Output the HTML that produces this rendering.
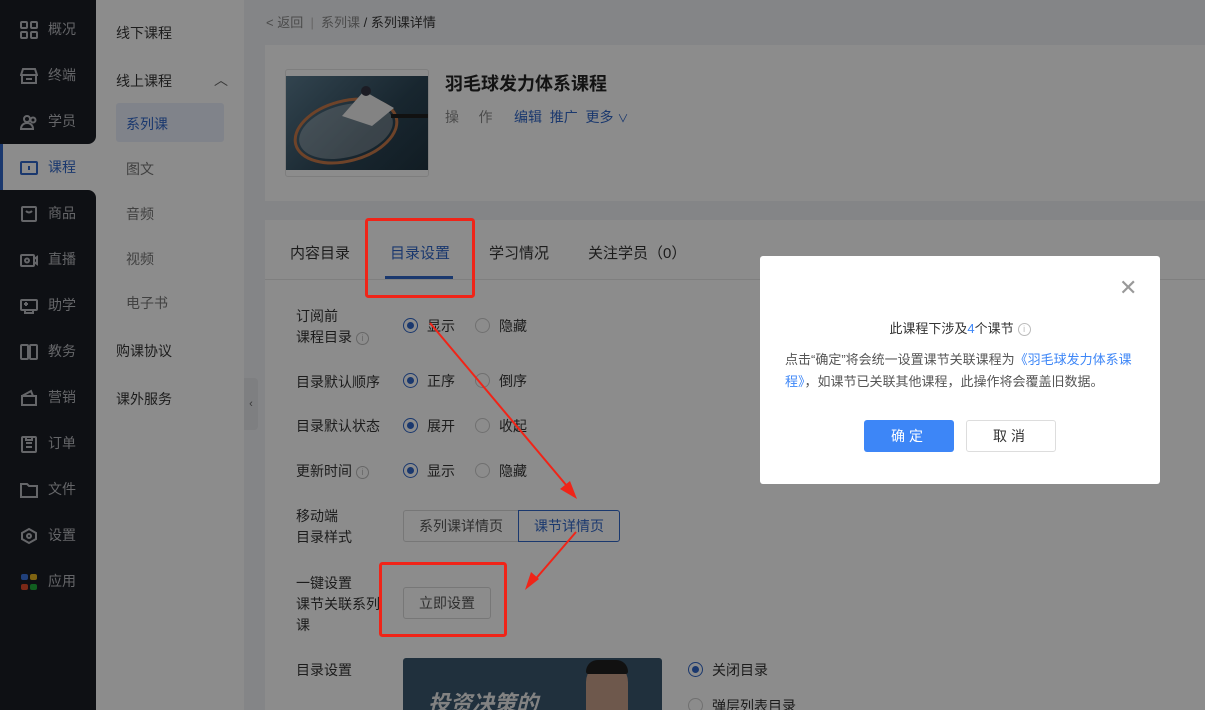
<!DOCTYPE html>
<html style="overflow:hidden;height:710px"><head><meta charset="utf-8"><style>
*{margin:0;padding:0;box-sizing:border-box}
html,body{width:1205px;height:710px;overflow:hidden}
body{position:relative;font-family:"Liberation Sans","Noto Sans CJK SC",sans-serif;font-size:14px;color:#1c1c1c;background:#848587}
.a{position:absolute;white-space:nowrap}
#side{position:absolute;left:0;top:0;width:96px;height:710px;background:#8c8c8c}
.dk{position:absolute;left:0;width:96px;background:#0e1014}
.si{position:absolute;left:20px;width:70px;height:20px;color:#656669;font-size:14px}
.si svg{position:absolute;left:0;top:2px}
.si span{position:absolute;left:28px;top:0}
#side2{position:absolute;left:96px;top:0;width:148px;height:710px;background:#8c8c8c}
.card{position:absolute;background:#8c8c8c}
.r{position:absolute;width:15px;height:15px;border-radius:50%;border:1px solid #707070;background:#8c8c8c}
.r.on{border-color:#1a386e}
.r.on:after{content:"";position:absolute;left:3px;top:3px;width:7px;height:7px;border-radius:50%;background:#1a386e}
.info{display:inline-block;width:13px;height:13px;border:1px solid #676767;border-radius:50%;font-size:9px;line-height:11px;text-align:center;color:#676767;vertical-align:1px;margin-left:4px}
.info2{display:inline-block;width:13px;height:13px;border:1px solid #bbb;border-radius:50%;font-size:9px;line-height:11px;text-align:center;color:#bbb;vertical-align:1px;margin-left:4px}
</style></head><body>
<div id="side">
 <div class="dk" style="top:0;height:144px;border-bottom-right-radius:8px"></div>
 <div class="dk" style="top:190px;height:520px;border-top-right-radius:8px"></div>
 <div style="position:absolute;left:0;top:144px;width:3px;height:46px;background:#1a386e"></div>
 <div class="si" style="top:19px"><svg width="18" height="18" fill="none" stroke="#656669" stroke-width="2"><rect x="1" y="1" width="6" height="6" rx="1"/><rect x="11" y="1" width="6" height="6" rx="1"/><rect x="1" y="11" width="6" height="6" rx="1"/><rect x="11" y="11" width="6" height="6" rx="1"/></svg><span>概况</span></div>
 <div class="si" style="top:65px"><svg width="18" height="18" fill="none" stroke="#656669" stroke-width="2"><path d="M3 2h12l2 6H1z M2 8v8h14V8 M6 12h6"/></svg><span>终端</span></div>
 <div class="si" style="top:111px"><svg width="18" height="18" fill="none" stroke="#656669" stroke-width="2"><circle cx="7" cy="6" r="3"/><circle cx="13" cy="7" r="2.5"/><path d="M1 16c0-4 3-6 6-6s6 2 6 6z"/></svg><span>学员</span></div>
 <div class="si" style="top:157px;color:#1a386e"><svg width="18" height="18" fill="none" stroke="#1a386e" stroke-width="2"><rect x="1" y="3" width="16" height="12" rx="1"/><path d="M9 7v4"/></svg><span>课程</span></div>
 <div class="si" style="top:203px"><svg width="18" height="18" fill="none" stroke="#656669" stroke-width="2"><rect x="2" y="2" width="14" height="14" rx="1"/><path d="M6 6q3 3 6 0"/></svg><span>商品</span></div>
 <div class="si" style="top:249px"><svg width="18" height="18" fill="none" stroke="#656669" stroke-width="2"><rect x="1" y="4" width="13" height="11" rx="1"/><circle cx="7" cy="9.5" r="2"/><path d="M14 8l3-2v7l-3-2"/></svg><span>直播</span></div>
 <div class="si" style="top:295px"><svg width="18" height="18" fill="none" stroke="#656669" stroke-width="2"><rect x="1" y="3" width="16" height="10" rx="1"/><path d="M5 13v3h8v-3 M4 7h4 M6 5v4"/></svg><span>助学</span></div>
 <div class="si" style="top:341px"><svg width="18" height="18" fill="none" stroke="#656669" stroke-width="2"><rect x="1" y="2" width="7" height="14" rx="1"/><rect x="10" y="2" width="7" height="14" rx="1"/></svg><span>教务</span></div>
 <div class="si" style="top:387px"><svg width="18" height="18" fill="none" stroke="#656669" stroke-width="2"><path d="M2 7h14v9H2z M2 7l9-5 2 5"/></svg><span>营销</span></div>
 <div class="si" style="top:433px"><svg width="18" height="18" fill="none" stroke="#656669" stroke-width="2"><rect x="2" y="2" width="14" height="15" rx="1"/><path d="M6 8h6 M6 12h6 M6 2v3h6V2"/></svg><span>订单</span></div>
 <div class="si" style="top:479px"><svg width="18" height="18" fill="none" stroke="#656669" stroke-width="2"><path d="M1 3h6l2 2h8v11H1z"/></svg><span>文件</span></div>
 <div class="si" style="top:525px"><svg width="18" height="18" fill="none" stroke="#656669" stroke-width="2"><path d="M9 2l7 4v6l-7 4-7-4V6z"/><circle cx="9" cy="9" r="2"/></svg><span>设置</span></div>
 <div class="si" style="top:571px"><svg width="18" height="18"><rect x="1" y="1" width="7" height="6" rx="2" fill="#20407b"/><rect x="10" y="1" width="7" height="6" rx="2" fill="#7f6311"/><rect x="1" y="11" width="7" height="6" rx="2" fill="#7b2917"/><rect x="10" y="11" width="7" height="6" rx="2" fill="#115f20"/></svg><span>应用</span></div>
</div>
<div id="side2">
 <div class="a" style="left:20px;top:23px">线下课程</div>
 <div class="a" style="left:20px;top:71px">线上课程</div>
 <div class="a" style="left:118px;top:70px;color:#383838">︿</div>
 <div class="a" style="left:20px;top:103px;width:108px;height:39px;background:#80838a;border-radius:3px"></div>
 <div class="a" style="left:30px;top:114px;color:#1a386e">系列课</div>
 <div class="a" style="left:30px;top:159px;color:#414141">图文</div>
 <div class="a" style="left:30px;top:204px;color:#414141">音频</div>
 <div class="a" style="left:30px;top:249px;color:#414141">视频</div>
 <div class="a" style="left:30px;top:293px;color:#414141">电子书</div>
 <div class="a" style="left:20px;top:341px">购课协议</div>
 <div class="a" style="left:20px;top:389px">课外服务</div>
</div>
<div class="a" style="left:244px;top:378px;width:14px;height:52px;background:#7e7f81;border-radius:0 4px 4px 0;color:#383838;font-size:11px;line-height:52px;text-align:center">‹</div>
<div class="a" style="left:266px;top:12px;font-size:13px;color:#4b4b4b">&lt; 返回 &nbsp;<span style="color:#666">|</span>&nbsp; 系列课 <span style="color:#1c1c1c">/ 系列课详情</span></div>
<div class="card" style="left:265px;top:45px;width:940px;height:156px"></div>
<div class="a" style="left:285px;top:69px;width:144px;height:108px;border:1px solid #7e7e7e;border-radius:3px"></div>
<div class="a" style="left:286px;top:76px;width:142px;height:94px;background:linear-gradient(135deg,#32444f,#18262f 60%,#111c23);overflow:hidden">
 <svg width="142" height="94"><ellipse cx="60" cy="55" rx="52" ry="30" fill="none" stroke="#6e4329" stroke-width="3" transform="rotate(-15 60 55)"/><ellipse cx="60" cy="55" rx="48" ry="26" fill="rgba(140,140,140,.3)" transform="rotate(-15 60 55)"/><path d="M105 40h37" stroke="#111" stroke-width="4"/><path d="M78 15l-22 25 30 10 22-18z" fill="#838383"/><circle cx="80" cy="15" r="5" fill="#1c1c24"/></svg>
</div>
<div class="a" style="left:445px;top:70px;font-size:18px;font-weight:bold;color:#131313">羽毛球发力体系课程</div>
<div class="a" style="left:445px;top:107px;color:#4b4b4b">操 &nbsp; &nbsp; 作</div>
<div class="a" style="left:514px;top:107px;color:#1a386e">编辑 &nbsp;推广 &nbsp;更多 <span style="font-size:11px">∨</span></div>
<div class="card" style="left:265px;top:220px;width:940px;height:490px"></div>
<div class="a" style="left:290px;top:242px;font-size:15px">内容目录</div>
<div class="a" style="left:390px;top:242px;font-size:15px;color:#1a386e">目录设置</div>
<div class="a" style="left:489px;top:242px;font-size:15px">学习情况</div>
<div class="a" style="left:588px;top:242px;font-size:15px">关注学员（0）</div>
<div class="a" style="left:265px;top:279px;width:940px;height:1px;background:#7f7f7f"></div>
<div class="a" style="left:385px;top:276px;width:68px;height:3px;background:#1a386e"></div>
<div class="a" style="left:296px;top:306px;line-height:21px">订阅前<br>课程目录<span class="info">i</span></div>
<div class="a" style="left:296px;top:372px">目录默认顺序</div>
<div class="a" style="left:296px;top:416px">目录默认状态</div>
<div class="a" style="left:296px;top:461px">更新时间<span class="info">i</span></div>
<div class="r on" style="left:403px;top:318px"></div><div class="a" style="left:427px;top:316px">显示</div><div class="r" style="left:475px;top:318px"></div><div class="a" style="left:499px;top:316px">隐藏</div>
<div class="r on" style="left:403px;top:373px"></div><div class="a" style="left:427px;top:371px">正序</div><div class="r" style="left:475px;top:373px"></div><div class="a" style="left:499px;top:371px">倒序</div>
<div class="r on" style="left:403px;top:418px"></div><div class="a" style="left:427px;top:416px">展开</div><div class="r" style="left:475px;top:418px"></div><div class="a" style="left:499px;top:416px">收起</div>
<div class="r on" style="left:403px;top:463px"></div><div class="a" style="left:427px;top:461px">显示</div><div class="r" style="left:475px;top:463px"></div><div class="a" style="left:499px;top:461px">隐藏</div>
<div class="a" style="left:296px;top:506px;line-height:21px">移动端<br>目录样式</div>
<div class="a" style="left:403px;top:510px;width:116px;height:32px;border:1px solid #777;border-radius:3px 0 0 3px;text-align:center;line-height:30px;color:#2f2f2f">系列课详情页</div>
<div class="a" style="left:518px;top:510px;width:102px;height:32px;border:1px solid #1a386e;border-radius:0 3px 3px 0;text-align:center;line-height:30px;color:#1a386e">课节详情页</div>
<div class="a" style="left:296px;top:573px;line-height:21px">一键设置<br>课节关联系列<br>课</div>
<div class="a" style="left:403px;top:587px;width:88px;height:32px;border:1px solid #777;border-radius:3px;text-align:center;line-height:30px;color:#2f2f2f">立即设置</div>
<div class="a" style="left:296px;top:660px">目录设置</div>
<div class="a" style="left:403px;top:658px;width:259px;height:52px;background:#20303d;border-radius:3px 3px 0 0;overflow:hidden"><div class="a" style="left:25px;top:28px;font-size:22px;font-weight:bold;color:#828282;font-style:italic">投资决策的</div><div class="a" style="left:183px;top:4px;width:42px;height:48px;border-radius:20px 20px 0 0;background:#6e584c"></div><div class="a" style="left:183px;top:2px;width:42px;height:14px;border-radius:20px 20px 4px 4px;background:#111"></div></div>
<div class="r on" style="left:688px;top:662px"></div><div class="a" style="left:712px;top:660px">关闭目录</div>
<div class="r" style="left:688px;top:698px"></div><div class="a" style="left:712px;top:696px">弹层列表目录</div>
<svg class="a" style="left:0;top:0" width="1205" height="710">
<rect x="366.5" y="219.5" width="107" height="77" fill="none" stroke="#f02418" stroke-width="3" rx="2"/>
<rect x="380.5" y="563.5" width="125" height="72" fill="none" stroke="#f02418" stroke-width="3" rx="2"/>
<path d="M430 323L572 492" stroke="#f02418" stroke-width="2"/><path d="M577 499l-17-10 10-8z" fill="#f02418"/>
<path d="M576 532L533 582" stroke="#f02418" stroke-width="2"/><path d="M525 590l6-18 8 7z" fill="#f02418"/>
</svg>
<div class="a" style="left:760px;top:256px;width:400px;height:228px;background:#fff;border-radius:3px"></div>
<div class="a" style="left:1119px;top:275px;font-size:22px;color:#999;font-weight:300">✕</div>
<div class="a" style="left:760px;top:318px;width:400px;text-align:center;font-size:13px;color:#333">此课程下涉及<span style="color:#3d86f7">4</span>个课节<span class="info2">i</span></div>
<div class="a" style="left:785px;top:349px;width:360px;white-space:normal;font-size:13px;line-height:22px;color:#555">点击“确定”将会统一设置课节关联课程为<span style="color:#3d86f7">《羽毛球发力体系课程》</span>，如课节已关联其他课程，此操作将会覆盖旧数据。</div>
<div class="a" style="left:864px;top:420px;width:90px;height:32px;background:#3d86f7;border-radius:3px;color:#fff;text-align:center;line-height:32px;letter-spacing:4px">确定</div>
<div class="a" style="left:966px;top:420px;width:90px;height:32px;border:1px solid #ddd;border-radius:3px;color:#333;text-align:center;line-height:30px;letter-spacing:4px">取消</div>
</body></html>
